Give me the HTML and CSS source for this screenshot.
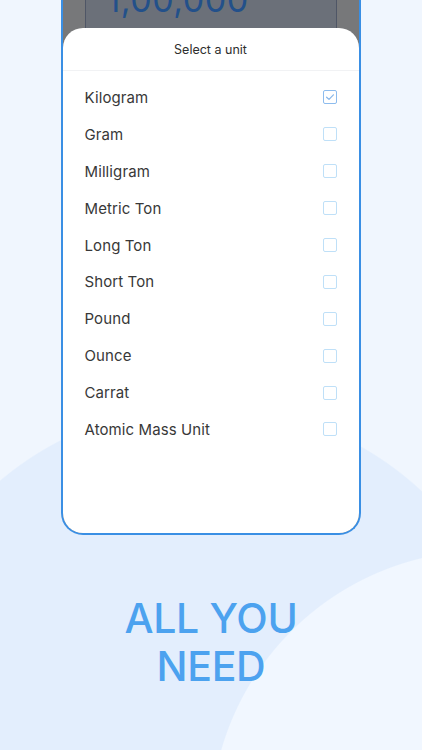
FILE: index.html
```html
<!DOCTYPE html>
<html lang="en">
<head>
<meta charset="utf-8">
<title>Select a unit</title>
<link rel="stylesheet" href="styles.css">
</head>
<body>
<div class="page">
  <div class="phone">
    <div class="backdrop">
      <div class="input-box"><span class="input-value">1,00,000</span></div>
    </div>
    <div class="sheet">
      <div class="sheet-title">Select a unit</div>
      <ul class="unit-list">
        <li class="unit-row"><span>Kilogram</span><span class="box checked"><svg viewBox="0 0 14 14" width="14" height="14"><path d="M3.6 7.2 L6 9.4 L10.4 4.8" fill="none" stroke="#86b6ea" stroke-width="1.2" stroke-linecap="round" stroke-linejoin="round"/></svg></span></li>
        <li class="unit-row"><span>Gram</span><span class="box"></span></li>
        <li class="unit-row"><span>Milligram</span><span class="box"></span></li>
        <li class="unit-row"><span>Metric Ton</span><span class="box"></span></li>
        <li class="unit-row"><span>Long Ton</span><span class="box"></span></li>
        <li class="unit-row"><span>Short Ton</span><span class="box"></span></li>
        <li class="unit-row"><span>Pound</span><span class="box"></span></li>
        <li class="unit-row"><span>Ounce</span><span class="box"></span></li>
        <li class="unit-row"><span>Carrat</span><span class="box"></span></li>
        <li class="unit-row"><span>Atomic Mass Unit</span><span class="box"></span></li>
      </ul>
    </div>
  </div>
  <h1 class="headline">ALL YOU<br>NEED</h1>
</div>
</body>
</html>
```

FILE: styles.css
```css
html, body {
  margin: 0;
  padding: 0;
}
body {
  width: 422px;
  height: 750px;
  overflow: hidden;
  font-family: Inter, "Noto Sans", sans-serif;
  background:
    radial-gradient(circle 276px at 486px 826px, #f1f7ff 99.6%, rgba(241,247,255,0) 100%),
    radial-gradient(circle 318px at 205px 723px, #e3eefd 99.6%, rgba(227,238,253,0) 100%),
    #f0f6fe;
}
.page {
  display: flex;
  flex-direction: column;
  align-items: center;
}
.phone {
  box-sizing: border-box;
  width: 300px;
  height: 535px;
  margin-left: -1px;
  border: 2px solid #3a8fe4;
  border-top: none;
  border-radius: 0 0 22px 22px;
  background: #777879;
  display: flex;
  flex-direction: column;
  overflow: hidden;
}
.backdrop {
  height: 29px;
  flex: none;
  display: flex;
  justify-content: center;
  background: #77787a;
  overflow: hidden;
}
.input-box {
  box-sizing: border-box;
  width: 252px;
  height: 40px;
  background: #6b7079;
  border: 1px solid #4f5666;
  border-top: none;
  padding-left: 21px;
  overflow: hidden;
}
.input-value {
  display: block;
  margin-top: -17px;
  font-size: 34px;
  line-height: 34px;
  color: #23508a;
  letter-spacing: 0.5px;
}
.sheet {
  flex: 1;
  background: #ffffff;
  border-radius: 20px 20px 0 0;
  margin-top: -1px;
  display: flex;
  flex-direction: column;
}
.sheet-title {
  height: 42px;
  flex: none;
  display: flex;
  align-items: center;
  justify-content: center;
  font-size: 12.5px;
  color: #2e2e2e;
  border-bottom: 1px solid #f1f2f4;
}
.unit-list {
  list-style: none;
  margin: 0;
  padding: 8px 22px 0 22px;
}
.unit-row {
  height: 36.9px;
  display: flex;
  align-items: center;
  justify-content: space-between;
  font-size: 15px;
  color: #383838;
  letter-spacing: 0.1px;
}
.box {
  box-sizing: border-box;
  width: 14px;
  height: 14px;
  border: 1.5px solid #bfe0f8;
  border-radius: 2px;
  display: flex;
  align-items: center;
  justify-content: center;
}
.box svg {
  flex: none;
}
.box.checked {
  border-color: #8dbcee;
}
.headline {
  margin: 59px 0 0 0;
  font-size: 41px;
  line-height: 48px;
  font-weight: 500;
  color: #4ca2ef;
  text-align: center;
  letter-spacing: -0.3px;
}
```
